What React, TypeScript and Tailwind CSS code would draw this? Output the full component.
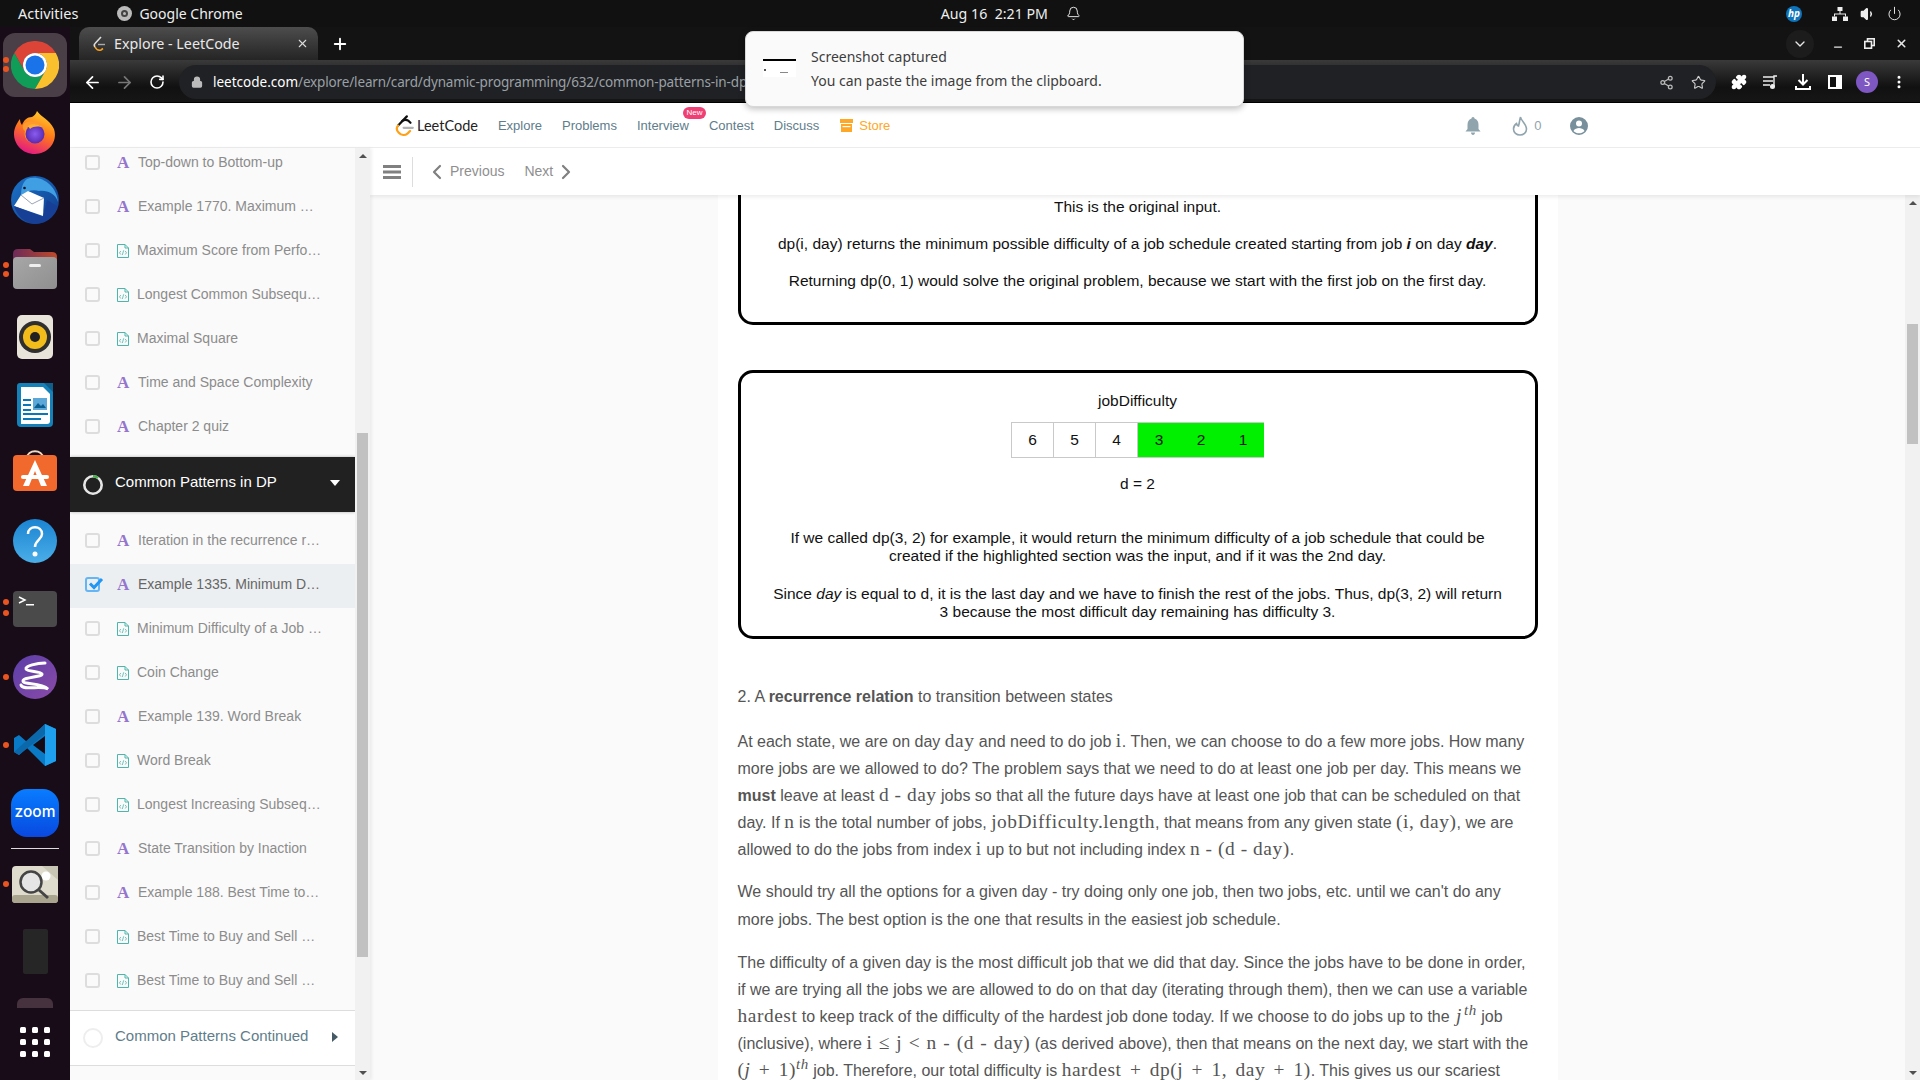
import React from "react";
import { ArrowLeft, ArrowRight, RotateCw, Lock, Share2, Star, Puzzle, MoreVertical, ChevronDown, ChevronLeft, ChevronRight, X, Plus, Minus, Power, Bell, Volume1 } from "lucide-react";

const ui = "font-['Noto_Sans','Open_Sans',sans-serif]";

function Dot({ top }: { top: number }) {
  return <span className="absolute left-[3px] w-[6px] h-[6px] rounded-full bg-[#e95420]" style={{ top }} />;
}

function ChromeIcon({ size = 48 }: { size?: number }) {
  return (
    <svg width={size} height={size} viewBox="0 0 48 48">
      <path d="M3.2 12A24 24 0 0 1 44.8 12H24A12 12 0 0 0 13.6 30Z" fill="#db4437" />
      <path d="M3.2 12L13.6 30A12 12 0 0 0 34.4 30L24 48A24 24 0 0 1 3.2 12Z" fill="#0f9d58" />
      <path d="M44.8 12H24A12 12 0 0 1 34.4 30L24 48A24 24 0 0 0 44.8 12Z" fill="#fbc02d" />
      <circle cx="24" cy="24" r="12" fill="#fff" />
      <circle cx="24" cy="24" r="9.5" fill="#1a73e8" />
    </svg>
  );
}

function Firefox() {
  return (
    <svg width="44" height="44" viewBox="0 0 44 44">
      <defs>
        <linearGradient id="ff" x1="0.7" y1="0" x2="0.3" y2="1">
          <stop offset="0" stopColor="#ffcf2e" />
          <stop offset="0.45" stopColor="#ff7a18" />
          <stop offset="1" stopColor="#e31587" />
        </linearGradient>
        <radialGradient id="fp" cx="0.5" cy="0.5" r="0.5">
          <stop offset="0" stopColor="#8a5cf0" />
          <stop offset="1" stopColor="#5a2bb0" />
        </radialGradient>
      </defs>
      <path d="M24 0C28 6 36 8 41 18C45 30 36 43 22 43C9 43 1 33 1 23C1 17 4 12 7 8C7 11 8 13 9 14C11 9 14 6 19 6C21 5 23 3 24 0Z" fill="url(#ff)" />
      <path d="M12 12C16 9 24 10 28 14C33 19 32 30 23 32C15 33 10 26 12 20C9 18 9 14 12 12Z" fill="#ff9a2e" />
      <circle cx="22" cy="23" r="9.5" fill="url(#fp)" />
      <path d="M15 15C19 12 25 12 30 17C26 15 21 15 17 18Z" fill="#ffb12e" />
    </svg>
  );
}

function Thunderbird() {
  return (
    <svg width="48" height="48" viewBox="0 0 48 48">
      <defs>
        <linearGradient id="tb" x1="0" y1="0" x2="1" y2="1">
          <stop offset="0" stopColor="#1b74c8" />
          <stop offset="1" stopColor="#123a8c" />
        </linearGradient>
      </defs>
      <circle cx="24" cy="24" r="24" fill="url(#tb)" />
      <path d="M16 3C30 -2 46 10 47 26C44 17 36 14 28 15C22 13 16 15 10 19C10 12 12 6 16 3Z" fill="#3f9fe2" />
      <path d="M10 19L17 15L33 22L32 40L3 30Z" fill="#fff" />
      <path d="M10 19L21 28L33 22" fill="none" stroke="#9aa5b5" strokeWidth="1" />
      <path d="M3 30L32 41L36 24L46 30C44 40 36 47 24 48C14 47 6 40 3 30Z" fill="#173f95" />
      <circle cx="13.500" cy="12" r="1.300" fill="#112" />
    </svg>
  );
}

function Files() {
  return (
    <svg width="44" height="40" viewBox="0 0 44 40">
      <defs>
        <linearGradient id="fg" x1="0" y1="0" x2="1" y2="1">
          <stop offset="0" stopColor="#a7a7a7" />
          <stop offset="1" stopColor="#8f8f8f" />
        </linearGradient>
        <linearGradient id="ft" x1="0" y1="0" x2="1" y2="0">
          <stop offset="0" stopColor="#6d2a58" />
          <stop offset="1" stopColor="#c04a2a" />
        </linearGradient>
      </defs>
      <path d="M0 5Q0 0 5 0H17L21 3H39Q44 3 44 8V14H0Z" fill="url(#ft)" />
      <rect x="0" y="8" width="44" height="32" rx="4" fill="url(#fg)" />
      <rect x="16" y="15" width="12" height="3" rx="1.500" fill="#eee" />
    </svg>
  );
}

function Rhythmbox() {
  return (
    <svg width="36" height="44" viewBox="0 0 36 44">
      <rect width="36" height="44" rx="5" fill="#e8e4d9" />
      <circle cx="18" cy="22" r="16" fill="#2f2f2f" />
      <circle cx="18" cy="22" r="12" fill="#f2bc1b" />
      <circle cx="18" cy="22" r="5" fill="#222" />
    </svg>
  );
}

function Writer() {
  return (
    <svg width="36" height="44" viewBox="0 0 36 44">
      <path d="M3 0H28L36 8V40Q36 44 32 44H4Q0 44 0 40V3Q0 0 3 0Z" fill="#1482b8" />
      <path d="M4 4H26L33 11V38Q33 41 30 41H4Z" fill="#fff" />
      <path d="M27 0L36 0V9Z" fill="#0f5f8a" />
      <path d="M6 16H14V18H6ZM6 21H14V23H6ZM6 26H14V28H6ZM6 30H31V32H6ZM6 35H24V37H6Z" fill="#0a78b8" />
      <rect x="16" y="15" width="14" height="12" fill="#5aa7d8" />
      <path d="M17 25L21 20L24 23L26 21L29 25Z" fill="#0a5f90" />
    </svg>
  );
}

function Software() {
  return (
    <svg width="44" height="42" viewBox="0 0 44 42">
      <path d="M14 9C14 0 30 0 30 9" fill="none" stroke="#f2d9c4" strokeWidth="2" />
      <rect y="6" width="44" height="36" rx="4" fill="#f2692e" />
      <path d="M22 11L34 37H28L22 22L16 37H10Z" fill="#fff" />
      <rect x="8" y="26" width="28" height="4" rx="2" fill="#fff" />
    </svg>
  );
}

function Help() {
  return (
    <svg width="44" height="44" viewBox="0 0 44 44">
      <defs>
        <linearGradient id="hp" x1="0" y1="0" x2="0" y2="1">
          <stop offset="0" stopColor="#1b84d2" />
          <stop offset="1" stopColor="#4aaee8" />
        </linearGradient>
      </defs>
      <circle cx="22" cy="22" r="22" fill="url(#hp)" />
      <path d="M15 15C15 6 29 6 29 15C29 21 22 21 22 28" fill="none" stroke="#fff" strokeWidth="2.500" />
      <circle cx="22" cy="35" r="2.500" fill="#fff" />
    </svg>
  );
}

function Terminal() {
  return (
    <svg width="44" height="36" viewBox="0 0 44 36">
      <rect width="44" height="36" rx="4" fill="#4a4a4a" />
      <path d="M6 6L12 9L6 12" fill="none" stroke="#fff" strokeWidth="1.500" />
      <rect x="13" y="13" width="8" height="1.500" fill="#fff" />
    </svg>
  );
}

function Emacs() {
  return (
    <svg width="44" height="44" viewBox="0 0 44 44">
      <defs>
        <linearGradient id="em" x1="0" y1="0" x2="1" y2="1">
          <stop offset="0" stopColor="#5b3fa8" />
          <stop offset="1" stopColor="#8a4aa8" />
        </linearGradient>
      </defs>
      <circle cx="22" cy="22" r="22" fill="url(#em)" />
      <path d="M32 8C24 8 12 11 13 14C14 17 28 16 29 19C30 22 10 22 10 26C10 30 28 27 35 34C28 30 10 36 8 30" fill="none" stroke="#fff" strokeWidth="3" strokeLinecap="round" />
    </svg>
  );
}

function VSCode() {
  return (
    <svg width="42" height="42" viewBox="0 0 42 42">
      <path d="M31 0L42 5V37L31 42L13 24L5 31L0 28V14L5 11L13 18Z" fill="#0a7ac6" />
      <path d="M31 0L42 5V37L31 42Z" fill="#1fa0ee" />
      <path d="M31 12V30L19 21Z" fill="#150b15" />
      <path d="M0 28L31 0L31 10L5 31Z" fill="#0b68ab" />
    </svg>
  );
}

function Viewer() {
  return (
    <svg width="46" height="37" viewBox="0 0 46 37">
      <rect width="46" height="37" rx="4" fill="#dfdccd" />
      <rect y="29" width="46" height="8" rx="3" fill="#aaa58f" />
      <path d="M30 0L46 14V0Z" fill="#c9c5b4" />
      <circle cx="34" cy="10" r="4.500" fill="#fff" />
      <circle cx="19" cy="16" r="10.500" fill="#e5e5e5" stroke="#444" strokeWidth="2.500" />
      <path d="M27 24L36 32" stroke="#444" strokeWidth="3" />
    </svg>
  );
}

function DocIcon() {
  return (
    <svg width="12" height="14" viewBox="0 0 12 14" className="shrink-0">
      <path d="M.5.5H8L11.500 4V13.500H.5Z" fill="none" stroke="#4db6ac" />
      <path d="M8 .5V4H11.500" fill="none" stroke="#4db6ac" />
      <path d="M3.800 7L2.500 8.800L3.800 10.500M8.200 7L9.500 8.800L8.200 10.500M6.700 6.300L5.300 11" fill="none" stroke="#4db6ac" strokeWidth=".8" />
    </svg>
  );
}

function Dock() {
  return (
    <div className="w-[70px] shrink-0 bg-[#170c17] flex flex-col items-center">
      <div className="relative mt-[6px] w-[64px] h-[64px] rounded-[12px] bg-[#4a3f47] flex items-center justify-center">
        <span className="absolute left-0 top-[24px] w-[6px] h-[6px] rounded-full bg-[#e95420]" />
        <span className="absolute left-0 top-[33px] w-[6px] h-[6px] rounded-full bg-[#e95420]" />
        <ChromeIcon />
      </div>
      <div className="mt-[14px] h-[44px]"><Firefox /></div>
      <div className="mt-[21px] h-[48px]"><Thunderbird /></div>
      <div className="mt-[25px] h-[40px] w-[70px] flex justify-center relative">
        <Dot top={13} /><Dot top={22} /><Files />
      </div>
      <div className="mt-[26px] h-[44px]"><Rhythmbox /></div>
      <div className="mt-[24px] h-[44px]"><Writer /></div>
      <div className="mt-[22px] h-[42px]"><Software /></div>
      <div className="mt-[28px] h-[44px]"><Help /></div>
      <div className="mt-[28px] h-[36px] w-[70px] flex justify-center relative">
        <Dot top={8} /><Dot top={19} /><Terminal />
      </div>
      <div className="mt-[28px] h-[44px] w-[70px] flex justify-center relative">
        <Dot top={19} /><Emacs />
      </div>
      <div className="mt-[25px] h-[42px] w-[70px] flex justify-center relative">
        <Dot top={18} /><VSCode />
      </div>
      <div className="mt-[23px] w-[48px] h-[48px] rounded-[16px] bg-gradient-to-b from-[#0b7cff] to-[#0b48e0] flex items-center justify-center text-white text-[15.500px] pb-[2px] font-medium font-['Inter',sans-serif]">zoom</div>
      <div className="mt-[11px] w-[48px] h-px bg-[#ddd]" />
      <div className="mt-[17px] h-[37px] w-[70px] flex justify-center relative">
        <Dot top={15} /><Viewer />
      </div>
      <div className="mt-[26px] w-[25px] h-[45px] bg-[#262626] rounded-[2px]" />
      <div className="mt-[24px] w-[36px] h-[10px] bg-[#46323f] rounded-t-[6px]" />
      <div className="mt-[19px] grid grid-cols-3 gap-[6px]">
        {Array.from({ length: 9 }).map((_, i) => (
          <span key={i} className="w-[6px] h-[6px] rounded-[1.500px] bg-white" />
        ))}
      </div>
    </div>
  );
}

function TopBar() {
  return (
    <div className={`h-[27px] shrink-0 bg-[#111111] text-[#eeeeee] text-[14px] flex items-center ${ui}`}>
      <span className="ml-[18px] text-[14.500px]">Activities</span>
      <span className="ml-[39px] w-[15px] h-[15px] rounded-full bg-[#bbbbbb] flex items-center justify-center">
        <span className="w-[7px] h-[7px] rounded-full border-2 border-[#444]" />
      </span>
      <span className="ml-[7px]">Google Chrome</span>
      <span className="ml-[698px] text-[14.200px] whitespace-pre">Aug 16  2:21 PM</span>
      <Bell size={15} strokeWidth={1.500} className="ml-[18px]" />
      <span className="ml-auto w-[16px] h-[16px] rounded-full bg-[#0e74bb] text-white text-[10px] italic font-bold flex items-center justify-center mr-[30px]">hp</span>
      <svg width="16" height="14" viewBox="0 0 16 14" className="mr-[12px]" fill="#eee">
        <rect x="5.500" y="0" width="5" height="4" />
        <rect x="0" y="9.500" width="5" height="4.500" />
        <rect x="11" y="9.500" width="5" height="4.500" />
        <path d="M7.500 4H8.500V6.500H14V9.500H13V7.500H3V9.500H2V6.500H7.500Z" />
      </svg>
      <Volume1 size={16} fill="#eee" className="mr-[11px]" />
      <Power size={15} strokeWidth={1.500} className="mr-[18px]" />
    </div>
  );
}

function Browser() {
  return (
    <div className={`shrink-0 ${ui}`}>
      <div className="h-[33px] bg-[#131313] flex items-stretch text-[#dddddd]">
        <div className="ml-[9px] w-[239px] rounded-t-[10px] bg-gradient-to-b from-[#4d4d4d] to-[#252525] flex items-center">
          <svg width="14" height="16" viewBox="0 0 14 16" className="ml-[13px]">
            <path d="M9 1L3 7.500Q1.500 9 3 11" fill="none" stroke="#ddd" strokeWidth="1.600" />
            <path d="M3 11Q5 15 9 14L11 12.500" fill="none" stroke="#f89f1b" strokeWidth="1.600" />
            <path d="M6 8.500H13" stroke="#aaa" strokeWidth="1.400" />
          </svg>
          <span className="ml-[8px] text-[14.300px] text-[#e8e8e8]">Explore - LeetCode</span>
          <X size={13} className="ml-auto mr-[9px]" />
        </div>
        <div className="ml-[11px] flex items-center">
          <Plus size={18} strokeWidth={2.500} className="text-white ml-[2px]" />
        </div>
        <div className="ml-auto flex items-center text-[#e6e6e6]">
          <span className="w-[28px] h-[28px] rounded-full bg-[#1c1c1c] flex items-center justify-center mr-[18px]"><ChevronDown size={16} /></span>
          <Minus size={12} strokeWidth={2.500} className="mr-[20px] mt-[7px]" />
          <svg width="11" height="11" viewBox="0 0 11 11" className="mr-[20px]" fill="none" stroke="#eee" strokeWidth="1.600">
            <rect x="3.500" y=".8" width="6.700" height="6.700" />
            <rect x=".8" y="3.500" width="6.700" height="6.700" fill="#131313" />
          </svg>
          <X size={13} strokeWidth={2.800} className="mr-[12px]" />
        </div>
      </div>
      <div className="h-[43px] pt-[2px] bg-gradient-to-b from-[#3a3a3a] via-[#111111] via-[65%] to-[#161616] border-b border-black flex items-center text-white relative">
        <ArrowLeft size={19} strokeWidth={2.200} className="ml-[13px]" />
        <ArrowRight size={19} strokeWidth={2.200} className="ml-[13px] text-[#777]" />
        <RotateCw size={16} strokeWidth={2.400} className="ml-[15px]" />
        <div className="ml-[14px] w-[1537px] h-[34px] rounded-full bg-[#202124] flex items-center overflow-hidden">
          <Lock size={12} strokeWidth={2.500} fill="#bbb" className="ml-[12px] text-[#bbb]" />
          <span className="ml-[10px] text-[13.500px] whitespace-nowrap">
            <span className="text-white">leetcode.com</span>
            <span className="text-[#9aa0a6] tracking-[-0.15px]">/explore/learn/card/dynamic-programming/632/common-patterns-in-dp</span>
          </span>
          <Share2 size={15} className="ml-auto text-[#bbb]" />
          <Star size={15} strokeWidth={1.800} className="ml-[17px] mr-[10px] text-[#ccc]" />
        </div>
        <Puzzle size={16} fill="#fff" className="ml-[15px]" />
        <svg width="16" height="14" viewBox="0 0 16 14" className="ml-[16px]" fill="none" stroke="#eee" strokeWidth="1.400">
          <path d="M0 2H11M0 6H10M0 10H7M14 1H11V11" />
          <circle cx="9.500" cy="11.500" r="1.800" fill="#eee" />
        </svg>
        <svg width="16" height="16" viewBox="0 0 16 16" className="ml-[16px]" fill="none" stroke="#fff" strokeWidth="2">
          <path d="M8 0V10M3.500 6L8 10.500L12.500 6M1 12V15H15V12" />
        </svg>
        <svg width="14" height="14" viewBox="0 0 14 14" className="ml-[17px]">
          <rect width="14" height="14" fill="#fff" />
          <rect x="2" y="2" width="6" height="10" fill="#111" />
        </svg>
        <span className="ml-[14px] w-[22px] h-[22px] rounded-full bg-[#7e57c2] text-white text-[11px] flex items-center justify-center">S</span>
        <MoreVertical size={16} strokeWidth={2.500} className="ml-[13px]" />
      </div>
    </div>
  );
}

function LeetLogo() {
  return (
    <svg width="22" height="22" viewBox="0 0 24 24" fill="none" strokeWidth="2.400" strokeLinecap="round" className="shrink-0">
      <path d="M14 1.500L4.500 11.500" stroke="#111" />
      <path d="M9 6.500C11 5 14 5 16 6.500L18 8.500" stroke="#111" />
      <path d="M4.500 11.500C2 14.500 3 17 5 19C8 22.500 12 22.500 15 20L17.500 17.500" stroke="#ffa116" />
      <path d="M10.500 14H20.500" stroke="#b3b3b3" />
    </svg>
  );
}

function Header() {
  const nav = "text-[13px] text-[#607d8b]";
  return (
    <div className="h-[45px] shrink-0 border-b border-[#eeeeee] flex items-center bg-white pt-[1px]">
      <div className="ml-[324px] flex items-center">
        <LeetLogo />
        <span className="ml-[1px] text-[14.500px] text-[#222] font-['Lato',sans-serif]">LeetCode</span>
      </div>
      <span className={`${nav} ml-[20px]`}>Explore</span>
      <span className={`${nav} ml-[20px]`}>Problems</span>
      <span className={`${nav} ml-[20px] relative`}>
        Interview
        <span className="absolute left-[46px] -top-[9px] w-[23px] h-[12px] rounded-full bg-[#ef3f74] text-white text-[8px] leading-[12px] text-center">New</span>
      </span>
      <span className={`${nav} ml-[20px]`}>Contest</span>
      <span className={`${nav} ml-[20px]`}>Discuss</span>
      <svg width="13" height="13" viewBox="0 0 13 13" className="ml-[21px]" fill="#ffa726">
        <path d="M0 0H13V4H0ZM1 5H12V13H1Z" />
        <rect x="2.500" y="7" width="8" height="1.200" fill="#fff" />
      </svg>
      <span className="text-[13px] text-[#ffa726] ml-[6px]">Store</span>
      <svg width="16" height="18" viewBox="0 0 15 18" className="ml-[575px]" fill="#90a4ae">
        <path d="M7.500 0C8.500 0 9 .8 9 1.600C12 2.500 13 5 13 8V12L15 14.500H0L2 12V8C2 5 3 2.500 6 1.600C6 .8 6.500 0 7.500 0ZM5.500 15.500H9.500C9.500 17 8.500 18 7.500 18C6.500 18 5.500 17 5.500 15.500Z" />
      </svg>
      <svg width="16" height="20" viewBox="0 0 16 20" className="ml-[31px]" fill="none" stroke="#90a4ae" strokeWidth="1.600">
        <path d="M8.500 1C9 5 14.500 8 14.500 13C14.500 16.500 11.500 19 8 19C4.500 19 1.500 16.500 1.500 13C1.500 10.500 3 8.500 4.500 7.500C4.800 9 5.500 9.800 6.500 10C7.500 7 7.500 4 8.500 1Z" />
      </svg>
      <span className="ml-[6px] text-[13px] text-[#90a4ae]">0</span>
      <svg width="18" height="18" viewBox="0 0 18 18" className="ml-[28px]" fill="#78909c">
        <path d="M9 0A9 9 0 1 0 9 18A9 9 0 1 0 9 0ZM9 3.500A3 3 0 1 1 9 9.500A3 3 0 1 1 9 3.500ZM3.500 14C4.500 11.800 7 11 9 11C11 11 13.500 11.800 14.500 14C13 15.500 11 16.300 9 16.300C7 16.300 5 15.500 3.500 14Z" />
      </svg>
    </div>
  );
}

type Row = { t: string; k: "a" | "d"; active?: boolean };

function SideRow({ t, k, active }: Row) {
  return (
    <div className={`h-[44px] flex items-center pb-[3px] pl-[15px] ${active ? "bg-[#eceff1]" : ""}`}>
      {active ? (
        <span className="relative w-[15px] h-[15px] rounded-[3px] border-2 border-[#64b5f6] shrink-0">
          <svg width="17" height="14" viewBox="0 0 17 14" className="absolute left-[0px] -top-[2px]">
            <path d="M3 6.500L7 10.500L15 2" fill="none" stroke="#2196f3" strokeWidth="3" />
          </svg>
        </span>
      ) : (
        <span className="w-[15px] h-[15px] rounded-[3px] border-2 border-[#dddddd] shrink-0" />
      )}
      {k === "a" ? (
        <span className="ml-[17px] w-[21px] text-[17px] font-bold text-[#9575cd] font-['Liberation_Serif',serif] leading-none">A</span>
      ) : (
        <span className="ml-[17px] w-[20px]"><DocIcon /></span>
      )}
      <span className={`text-[14px] whitespace-nowrap ${active ? "text-[#666666]" : "text-[#8c8c8c]"}`}>{t}</span>
    </div>
  );
}

function SideScroll({ thumbTop, thumbH }: { thumbTop: number; thumbH: number }) {
  return (
    <div className="w-[15px] shrink-0 bg-[#f1f1f1] flex flex-col items-center">
      <span className="mt-[6px] w-0 h-0 border-x-[4px] border-x-transparent border-b-[4px] border-b-[#505050]" />
      <div className="w-[11px] bg-[#c1c1c1]" style={{ marginTop: thumbTop, height: thumbH }} />
      <span className="mt-auto mb-[5px] w-0 h-0 border-x-[4px] border-x-transparent border-t-[4px] border-t-[#505050]" />
    </div>
  );
}

const top: Row[] = [
  { t: "Top-down to Bottom-up", k: "a" },
  { t: "Example 1770. Maximum …", k: "a" },
  { t: "Maximum Score from Perfo…", k: "d" },
  { t: "Longest Common Subsequ…", k: "d" },
  { t: "Maximal Square", k: "d" },
  { t: "Time and Space Complexity", k: "a" },
  { t: "Chapter 2 quiz", k: "a" },
];
const bottom: Row[] = [
  { t: "Iteration in the recurrence r…", k: "a" },
  { t: "Example 1335. Minimum D…", k: "a", active: true },
  { t: "Minimum Difficulty of a Job …", k: "d" },
  { t: "Coin Change", k: "d" },
  { t: "Example 139. Word Break", k: "a" },
  { t: "Word Break", k: "d" },
  { t: "Longest Increasing Subseq…", k: "d" },
  { t: "State Transition by Inaction", k: "a" },
  { t: "Example 188. Best Time to…", k: "a" },
  { t: "Best Time to Buy and Sell …", k: "d" },
  { t: "Best Time to Buy and Sell …", k: "d" },
];

function Sidebar() {
  return (
    <div className="w-[300px] shrink-0 flex relative z-10 shadow-[2px_0_3px_rgba(0,0,0,0.06)]">
      <div className="w-[285px] bg-[#fafafa] overflow-hidden flex flex-col">
        <div className="-mt-[6px]">
          {top.map((r) => <SideRow key={r.t} {...r} />)}
        </div>
        <div className="mt-[7px] h-[55px] shrink-0 bg-[#212121] shadow-[0_0_3px_rgba(0,0,0,0.3)] flex items-center text-white">
          <svg width="22" height="22" viewBox="0 0 22 22" className="ml-[12px]">
            <circle cx="11" cy="11" r="8.700" fill="none" stroke="#e6e6e6" strokeWidth="2.600" />
            <path d="M11 2.300A8.700 8.700 0 0 1 16 4" fill="none" stroke="#4caf50" strokeWidth="2.600" />
          </svg>
          <span className="ml-[11px] text-[15px] mb-[4px]">Common Patterns in DP</span>
          <span className="ml-auto mr-[15px] mb-[4px] w-0 h-0 border-x-[5px] border-x-transparent border-t-[6px] border-t-white" />
        </div>
        <div className="mt-[8px]">
          {bottom.map((r, i) => <SideRow key={i} {...r} />)}
        </div>
        <div className="mt-[6px] h-[56px] shrink-0 bg-white border-y border-[#dddddd] flex items-center">
          <span className="ml-[13px] w-[20px] h-[20px] rounded-full border-[2.500px] border-[#eeeeee]" />
          <span className="ml-[12px] text-[15px] text-[#607d8b] mb-[3px]">Common Patterns Continued</span>
          <span className="ml-auto mr-[17px] mb-[3px] w-0 h-0 border-y-[5px] border-y-transparent border-l-[6px] border-l-[#455a64]" />
        </div>
      </div>
      <SideScroll thumbTop={275} thumbH={524} />
    </div>
  );
}

function M({ children, className = "" }: { children: React.ReactNode; className?: string }) {
  return <span className={`font-['Liberation_Serif',serif] text-[19.400px] leading-none tracking-[0.55px] text-[#555555] ${className}`}>{children}</span>;
}

function Cell({ n, on }: { n: number; on?: boolean }) {
  return (
    <div className={`w-[42px] h-[36px] flex items-center justify-center border-y border-[#c9c9c9] ${on ? "bg-[#00f000]" : "border-r"}`}>{n}</div>
  );
}

function Content() {
  return (
    <div className="flex-1 min-w-0 bg-[#fafafa] flex justify-center overflow-hidden">
      <div className="w-[840px] bg-white px-[20px] font-['Liberation_Sans',sans-serif]">
        <div className="h-[130px] border-x-[3px] border-b-[3px] border-black rounded-b-[15px] text-[15.500px] text-[#111] text-center pt-[3px] leading-[17px]">
          <p>This is the original input.</p>
          <p className="mt-[20px]">dp(i, day) returns the minimum possible difficulty of a job schedule created starting from job <b><i>i</i></b> on day <b><i>day</i></b>.</p>
          <p className="mt-[20px]">Returning dp(0, 1) would solve the original problem, because we start with the first job on the first day.</p>
        </div>
        <div className="mt-[45px] h-[269px] border-[3px] border-black rounded-[15px] text-[15.500px] text-[#111] text-center pt-[19px] leading-[18px]">
          <p>jobDifficulty</p>
          <div className="mt-[12px] flex justify-center">
            <div className="border-l border-[#c9c9c9] flex">
              <Cell n={6} /><Cell n={5} /><Cell n={4} /><Cell n={3} on /><Cell n={2} on /><Cell n={1} on />
            </div>
          </div>
          <p className="mt-[17px]">d = 2</p>
          <p className="mt-[36px]">If we called dp(3, 2) for example, it would return the minimum difficulty of a job schedule that could be<br />created if the highlighted section was the input, and if it was the 2nd day.</p>
          <p className="mt-[20px]">Since <i>day</i> is equal to d, it is the last day and we have to finish the rest of the jobs. Thus, dp(3, 2) will return<br />3 because the most difficult day remaining has difficulty 3.</p>
        </div>
        <div className="mt-[44px] text-[16px] text-[#555555] whitespace-nowrap leading-[27px]">
          <p>2. A <b>recurrence relation</b> to transition between states</p>
          <p className="mt-[18px]">At each state, we are on day <M>day</M> and need to do job <M>i</M>. Then, we can choose to do a few more jobs. How many<br />more jobs are we allowed to do? The problem says that we need to do at least one job per day. This means we<br /><b>must</b> leave at least <M>d - day</M> jobs so that all the future days have at least one job that can be scheduled on that<br />day. If <M>n</M> is the total number of jobs, <M>jobDifficulty.length</M>, that means from any given state <M>(i, day)</M>, we are<br />allowed to do the jobs from index <M>i</M> up to but not including index <M>n - (d - day)</M>.</p>
          <p className="mt-[15px] leading-[28px]">We should try all the options for a given day - try doing only one job, then two jobs, etc. until we can't do any<br />more jobs. The best option is the one that results in the easiest job schedule.</p>
          <p className="mt-[15px]">The difficulty of a given day is the most difficult job that we did that day. Since the jobs have to be done in order,<br />if we are trying all the jobs we are allowed to do on that day (iterating through them), then we can use a variable<br /><M className="tracking-[0.8px]">hardest</M> to keep track of the difficulty of the hardest job done today. If we choose to do jobs up to the <M className="ml-[2px]"><i>j</i><sup className="text-[15px] italic ml-[2px]">th</sup></M> job<br />(inclusive), where <M className="[word-spacing:1px]">i ≤ j &lt; n - (d - day)</M> (as derived above), then that means on the next day, we start with the<br /><M className="[word-spacing:3px]">(<i>j</i> + 1)<sup className="text-[15px] italic">th</sup></M> job. Therefore, our total difficulty is <M className="[word-spacing:3px]">hardest + dp(j + 1, day + 1)</M>. This gives us our scariest</p>
        </div>
      </div>
    </div>
  );
}

function Main() {
  return (
    <div className="flex-1 min-w-0 flex flex-col">
      <div className="h-[47px] shrink-0 bg-white shadow-[0_2px_4px_rgba(0,0,0,0.08)] relative z-[5] flex items-center text-[#8f8f8f] text-[14px]">
        <svg width="18" height="14" viewBox="0 0 18 14" className="ml-[13px]" fill="#808080">
          <rect width="18" height="3" y="0" />
          <rect width="18" height="3" y="5.500" />
          <rect width="18" height="3" y="11" />
        </svg>
        <span className="ml-[11px] h-[30px] w-px bg-[#dddddd]" />
        <ChevronLeft size={24} strokeWidth={2.200} className="ml-[12px] text-[#808080]" />
        <span className="ml-[1px]">Previous</span>
        <span className="ml-[20px]">Next</span>
        <ChevronRight size={24} strokeWidth={2.200} className="ml-[1px] text-[#808080]" />
      </div>
      <div className="flex-1 min-h-0 flex">
        <Content />
        <SideScroll thumbTop={119} thumbH={120} />
      </div>
    </div>
  );
}

function Toast() {
  return (
    <div className={`absolute left-[745px] top-[31px] w-[499px] h-[76px] rounded-[8px] bg-[#fafafa] border border-[#d8d8d8] shadow-[0_2px_6px_rgba(0,0,0,0.25)] flex items-center z-20 ${ui}`}>
      <div className="ml-[17px] w-[33px] h-[18px] bg-white border-t-2 border-black mb-[2px] flex items-end">
        <span className="w-[2px] h-[2px] bg-[#555] ml-[1px] mb-[6px]" />
        <span className="w-[8px] h-px bg-[#888] ml-[14px] mb-[4px]" />
      </div>
      <div className="ml-[15px] text-[14px] text-[#3d3d3d] leading-[24px]">
        <div>Screenshot captured</div>
        <div>You can paste the image from the clipboard.</div>
      </div>
    </div>
  );
}

export default function App() {
  return (
    <div className="relative h-screen w-screen overflow-hidden flex flex-col bg-white font-['Liberation_Sans',sans-serif]">
      <TopBar />
      <div className="flex-1 min-h-0 flex">
        <Dock />
        <div className="flex-1 min-w-0 flex flex-col">
          <Browser />
          <Header />
          <div className="flex-1 min-h-0 flex">
            <Sidebar />
            <Main />
          </div>
        </div>
      </div>
      <Toast />
    </div>
  );
}
